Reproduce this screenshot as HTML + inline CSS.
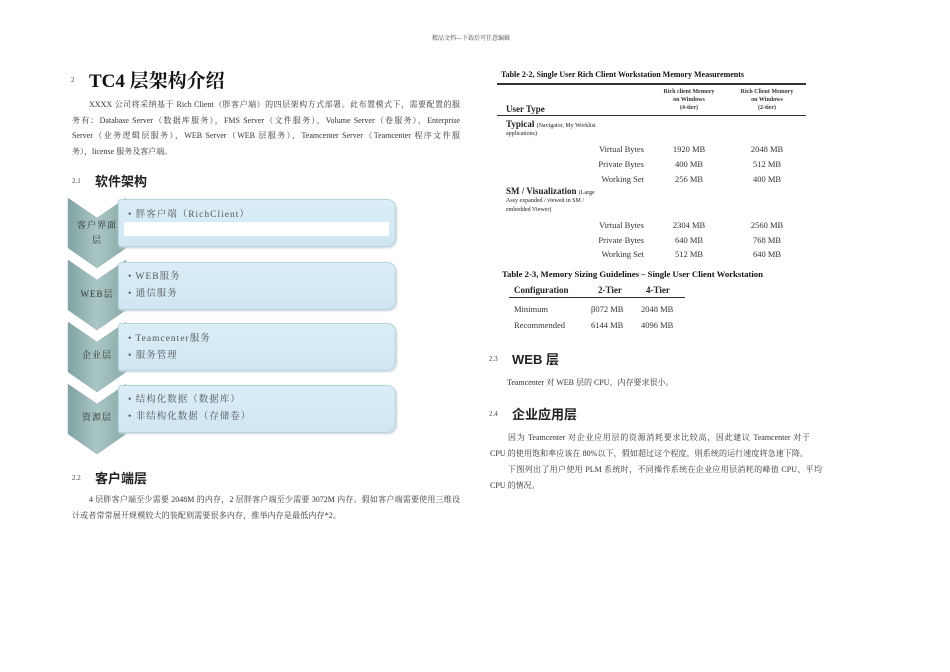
<!DOCTYPE html>
<html><head><meta charset="utf-8"><style>
*{margin:0;padding:0}
body{width:950px;height:672px;background:#fff;position:relative;overflow:hidden;font-family:"Liberation Serif","Noto Serif CJK SC",serif;color:#222}
.a{position:absolute;white-space:nowrap}
.p{font-size:8px;line-height:16px;color:#333}
.j{text-align:justify;text-align-last:justify;white-space:normal}
.h{font-family:"Liberation Sans","Noto Sans CJK SC",sans-serif;font-weight:bold;font-size:13px}
.n{font-size:7px;color:#444}
.t{font-size:8.5px;color:#333}
.b{font-weight:bold}
.box{position:absolute;left:118px;width:276px;height:46px;background:linear-gradient(#dbeef7,#cfe6f2);border:1px solid #b9d3de;border-radius:3px 9px 9px 3px;box-shadow:1px 1px 2px #c8d4d8}
.box span{position:absolute;left:9px;font-size:9.5px;color:#555;letter-spacing:1px}
.lab{position:absolute;left:68px;width:58px;text-align:center;font-size:9px;color:#333;line-height:15px;letter-spacing:1px}
</style></head><body>
<div class="a" style="left:432px;top:33px;font-size:6px;color:#444">精品文档---下载后可任意编辑</div>

<div class="a n" style="left:71px;top:76px">2</div>
<div class="a" style="left:89px;top:66px;font-size:19px;font-weight:bold;color:#111">TC4 层架构介绍</div>

<div class="a p j" style="left:89px;top:97px;width:371px">XXXX 公司将采纳基于 Rich Client（胖客户端）的四层架构方式部署。此布置模式下，需要配置的服</div>
<div class="a p j" style="left:72px;top:113px;width:388px">务有：Database Server（数据库服务），FMS Server（文件服务），Volume Server（卷服务），Enterprise</div>
<div class="a p j" style="left:72px;top:128px;width:388px">Server（业务逻辑层服务），WEB Server（WEB 层服务），Teamcenter Server（Teamcenter 程序文件服</div>
<div class="a p" style="left:72px;top:144px">务），license 服务及客户端。</div>

<div class="a n" style="left:72px;top:177px">2.1</div>
<div class="a h" style="left:95px;top:171px">软件架构</div>

<svg class="a" style="left:66px;top:196px" width="62" height="262" viewBox="0 0 62 262">
<defs><linearGradient id="g" x1="0" x2="1"><stop offset="0" stop-color="#7fa3a3"/><stop offset="0.5" stop-color="#a9c6c4"/><stop offset="1" stop-color="#88aaa8"/></linearGradient></defs>
<g fill="url(#g)" stroke="#9ab" stroke-width="0.5">
<path d="M2 2 L31 22 L60 2 L60 52 L31 72 L2 52Z"/>
<path d="M2 64 L31 84 L60 64 L60 114 L31 134 L2 114Z"/>
<path d="M2 126 L31 146 L60 126 L60 176 L31 196 L2 176Z"/>
<path d="M2 188 L31 208 L60 188 L60 238 L31 258 L2 238Z"/>
</g></svg>
<div class="lab" style="top:218px">客户界面<br>层</div>
<div class="lab" style="top:287px">WEB层</div>
<div class="lab" style="top:348px">企业层</div>
<div class="lab" style="top:410px">资源层</div>

<div class="box" style="top:199px"><span style="top:6px">• 胖客户端（RichClient）</span><div style="position:absolute;left:5px;top:22px;width:265px;height:14px;background:#fff"></div></div>
<div class="box" style="top:262px"><span style="top:5px">• WEB服务</span><span style="top:22px">• 通信服务</span></div>
<div class="box" style="top:323px"><span style="top:6px">• Teamcenter服务</span><span style="top:23px">• 服务管理</span></div>
<div class="box" style="top:385px"><span style="top:5px">• 结构化数据（数据库）</span><span style="top:22px">• 非结构化数据（存储卷）</span></div>

<div class="a n" style="left:72px;top:474px">2.2</div>
<div class="a h" style="left:95px;top:468px">客户端层</div>
<div class="a p j" style="left:89px;top:492px;width:371px">4 层胖客户端至少需要 2048M 的内存，2 层胖客户端至少需要 3072M 内存。假如客户端需要使用三维设</div>
<div class="a p" style="left:72px;top:508px;letter-spacing:0.15px">计或者常常展开规模较大的装配则需要很多内存，推举内存是最低内存*2。</div>

<div class="a b" style="left:501px;top:70px;font-size:8px;color:#111">Table 2-2, Single User Rich Client Workstation Memory Measurements</div>
<div class="a" style="left:497px;top:83px;width:309px;height:2px;background:#333"></div>
<div class="a b" style="left:650px;top:88px;width:78px;text-align:center;font-size:6px;line-height:8px;color:#333">Rich client Memory<br>on Windows<br>(4-tier)</div>
<div class="a b" style="left:728px;top:88px;width:78px;text-align:center;font-size:6px;line-height:8px;color:#333">Rich Client Memory<br>on Windows<br>(2-tier)</div>
<div class="a b" style="left:506px;top:104px;font-size:9px">User Type</div>
<div class="a" style="left:497px;top:115px;width:309px;height:1px;background:#333"></div>
<div class="a" style="left:506px;top:119px;font-size:9px"><b>Typical</b> <span style="font-size:6px">(Navigator, My Worklist</span></div>
<div class="a" style="left:506px;top:131px;font-size:6px">applications)</div>
<div class="a" style="left:506px;top:186px;font-size:9px"><b>SM / Visualization</b> <span style="font-size:6px">(Large</span></div>
<div class="a" style="left:506px;top:197px;font-size:6px;line-height:9px">Assy expanded / viewed in SM /<br>embedded Viewer)</div>

<div class="a t" style="left:560px;top:142px;width:84px;text-align:right;line-height:15px">Virtual Bytes<br>Private Bytes<br>Working Set</div>
<div class="a t" style="left:650px;top:142px;width:78px;text-align:center;line-height:15px">1920 MB<br>400 MB<br>256 MB</div>
<div class="a t" style="left:728px;top:142px;width:78px;text-align:center;line-height:15px">2048 MB<br>512 MB<br>400 MB</div>
<div class="a t" style="left:560px;top:218px;width:84px;text-align:right;line-height:14.5px">Virtual Bytes<br>Private Bytes<br>Working Set</div>
<div class="a t" style="left:650px;top:218px;width:78px;text-align:center;line-height:14.5px">2304 MB<br>640 MB<br>512 MB</div>
<div class="a t" style="left:728px;top:218px;width:78px;text-align:center;line-height:14.5px">2560 MB<br>768 MB<br>640 MB</div>

<div class="a b" style="left:502px;top:269px;font-size:8.7px;color:#111">Table 2-3, Memory Sizing Guidelines – Single User Client Workstation</div>
<div class="a b" style="left:514px;top:285px;font-size:9px">Configuration</div>
<div class="a b" style="left:598px;top:285px;font-size:9px">2-Tier</div>
<div class="a b" style="left:646px;top:285px;font-size:9px">4-Tier</div>
<div class="a" style="left:509px;top:297px;width:176px;height:1px;background:#333"></div>
<div class="a t" style="left:514px;top:301px;line-height:16px">Minimum<br>Recommended</div>
<div class="a t" style="left:591px;top:301px;line-height:16px">β072 MB<br>6144 MB</div>
<div class="a t" style="left:641px;top:301px;line-height:16px">2048 MB<br>4096 MB</div>

<div class="a n" style="left:489px;top:355px">2.3</div>
<div class="a h" style="left:512px;top:349px">WEB 层</div>
<div class="a p" style="left:507px;top:375px">Teamcenter 对 WEB 层的 CPU、内存要求很小。</div>

<div class="a n" style="left:489px;top:410px">2.4</div>
<div class="a h" style="left:512px;top:404px">企业应用层</div>
<div class="a p j" style="left:508px;top:430px;width:302px">因为 Teamcenter 对企业应用层的资源消耗要求比较高，因此建议 Teamcenter 对于</div>
<div class="a p j" style="left:490px;top:446px;width:318px">CPU 的使用饱和率应该在 80%以下，假如超过这个程度，则系统的运行速度将急速下降。</div>
<div class="a p j" style="left:508px;top:462px;width:314px">下图列出了用户使用 PLM 系统时，不同操作系统在企业应用层消耗的峰值 CPU、平均</div>
<div class="a p" style="left:490px;top:478px">CPU 的情况。</div>
</body></html>
